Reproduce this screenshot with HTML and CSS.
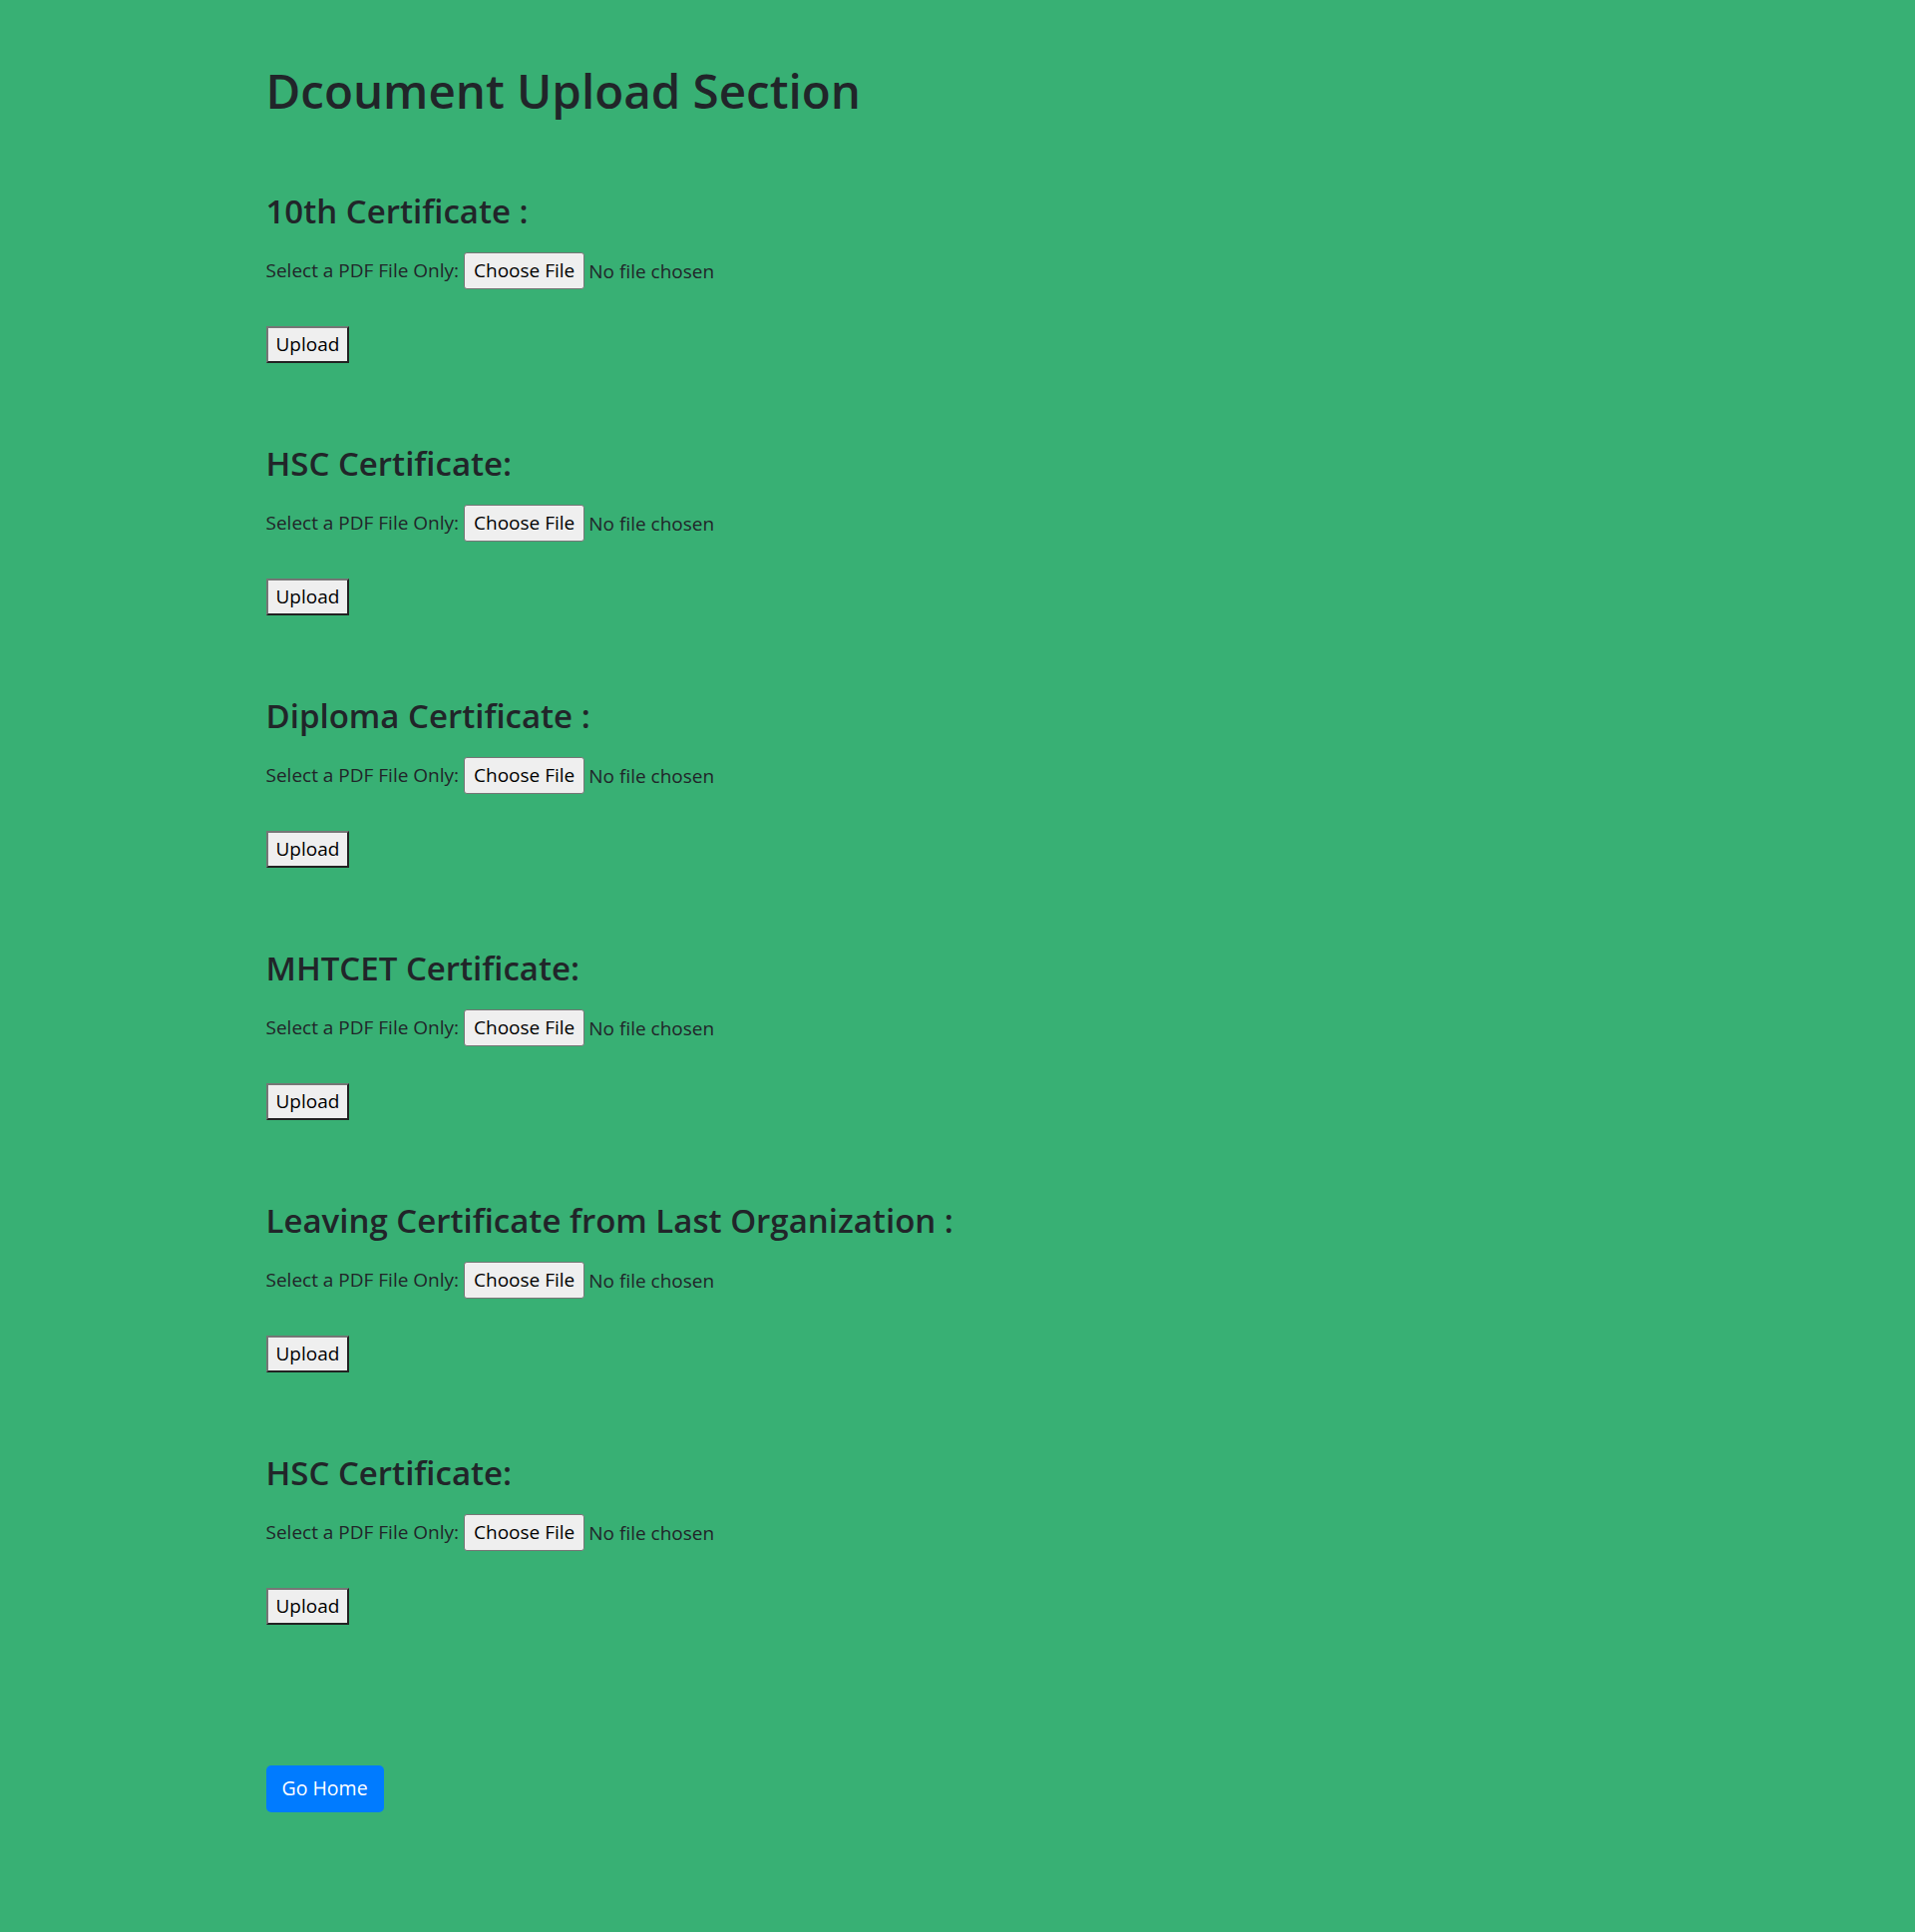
FILE: index.html
```html
<!DOCTYPE html>
<html lang="en">
<head>
<meta charset="utf-8">
<title>Document Upload</title>
<link rel="stylesheet" href="styles.css">
</head>
<body>
<div class="container">
  <h1 class="title">Dcoument Upload Section</h1>

  <form class="section">
    <h3 class="section-title">10th Certificate :</h3>
    <div class="row"><label class="label">Select a PDF File Only:</label> <input class="file" type="file" accept="application/pdf"></div>
    <button class="upload" type="button">Upload</button>
  </form>

  <form class="section">
    <h3 class="section-title">HSC Certificate:</h3>
    <div class="row"><label class="label">Select a PDF File Only:</label> <input class="file" type="file" accept="application/pdf"></div>
    <button class="upload" type="button">Upload</button>
  </form>

  <form class="section">
    <h3 class="section-title">Diploma Certificate :</h3>
    <div class="row"><label class="label">Select a PDF File Only:</label> <input class="file" type="file" accept="application/pdf"></div>
    <button class="upload" type="button">Upload</button>
  </form>

  <form class="section">
    <h3 class="section-title">MHTCET Certificate:</h3>
    <div class="row"><label class="label">Select a PDF File Only:</label> <input class="file" type="file" accept="application/pdf"></div>
    <button class="upload" type="button">Upload</button>
  </form>

  <form class="section">
    <h3 class="section-title">Leaving Certificate from Last Organization :</h3>
    <div class="row"><label class="label">Select a PDF File Only:</label> <input class="file" type="file" accept="application/pdf"></div>
    <button class="upload" type="button">Upload</button>
  </form>

  <form class="section">
    <h3 class="section-title">HSC Certificate:</h3>
    <div class="row"><label class="label">Select a PDF File Only:</label> <input class="file" type="file" accept="application/pdf"></div>
    <button class="upload" type="button">Upload</button>
  </form>

  <a class="btn-home" href="#">Go Home</a>
</div>
</body>
</html>
```

FILE: styles.css
```css
html, body {
  margin: 0;
  padding: 0;
  background: #38b074;
}

*, *::before, *::after {
  box-sizing: border-box;
}

body {
  font-family: "Open Sans", "Noto Sans", sans-serif;
  font-size: 19px;
  color: #212529;
  min-height: 1937px;
}

.container {
  max-width: 1425px;
  margin: 0 auto;
  padding: 62px 19px 0;
}

.title {
  font-size: 47.5px;
  font-weight: 600;
  line-height: 57.6px;
  margin: 0 0 72px;
}

.section {
  display: flex;
  flex-direction: column;
  align-items: flex-start;
  margin: 0 0 81px;
}

.section-title {
  font-size: 33px;
  font-weight: 600;
  line-height: 40px;
  margin: 0 0 21px;
}

.row {
  display: flex;
  align-items: center;
  height: 37px;
  margin: 0 0 37px;
}

.label {
  margin-right: 5px;
}

.file {
  font: inherit;
  color: #212529;
}

.file::file-selector-button {
  font: inherit;
  color: #000;
  background: #efefef;
  border: 1px solid #767676;
  border-radius: 3px;
  height: 37px;
  padding: 0 9px;
  margin-right: 4px;
}

.upload {
  font: inherit;
  color: #000;
  background: #efefef;
  height: 37px;
  padding: 0 8px;
  border: 2px solid;
  border-color: #767676 #222 #222 #767676;
  border-radius: 0;
}

.btn-home {
  display: inline-block;
  margin-top: 60px;
  background: #007bff;
  color: #fff;
  text-decoration: none;
  font-size: 19.5px;
  line-height: 30px;
  padding: 8px 16px 9px;
  border-radius: 5px;
}
```
